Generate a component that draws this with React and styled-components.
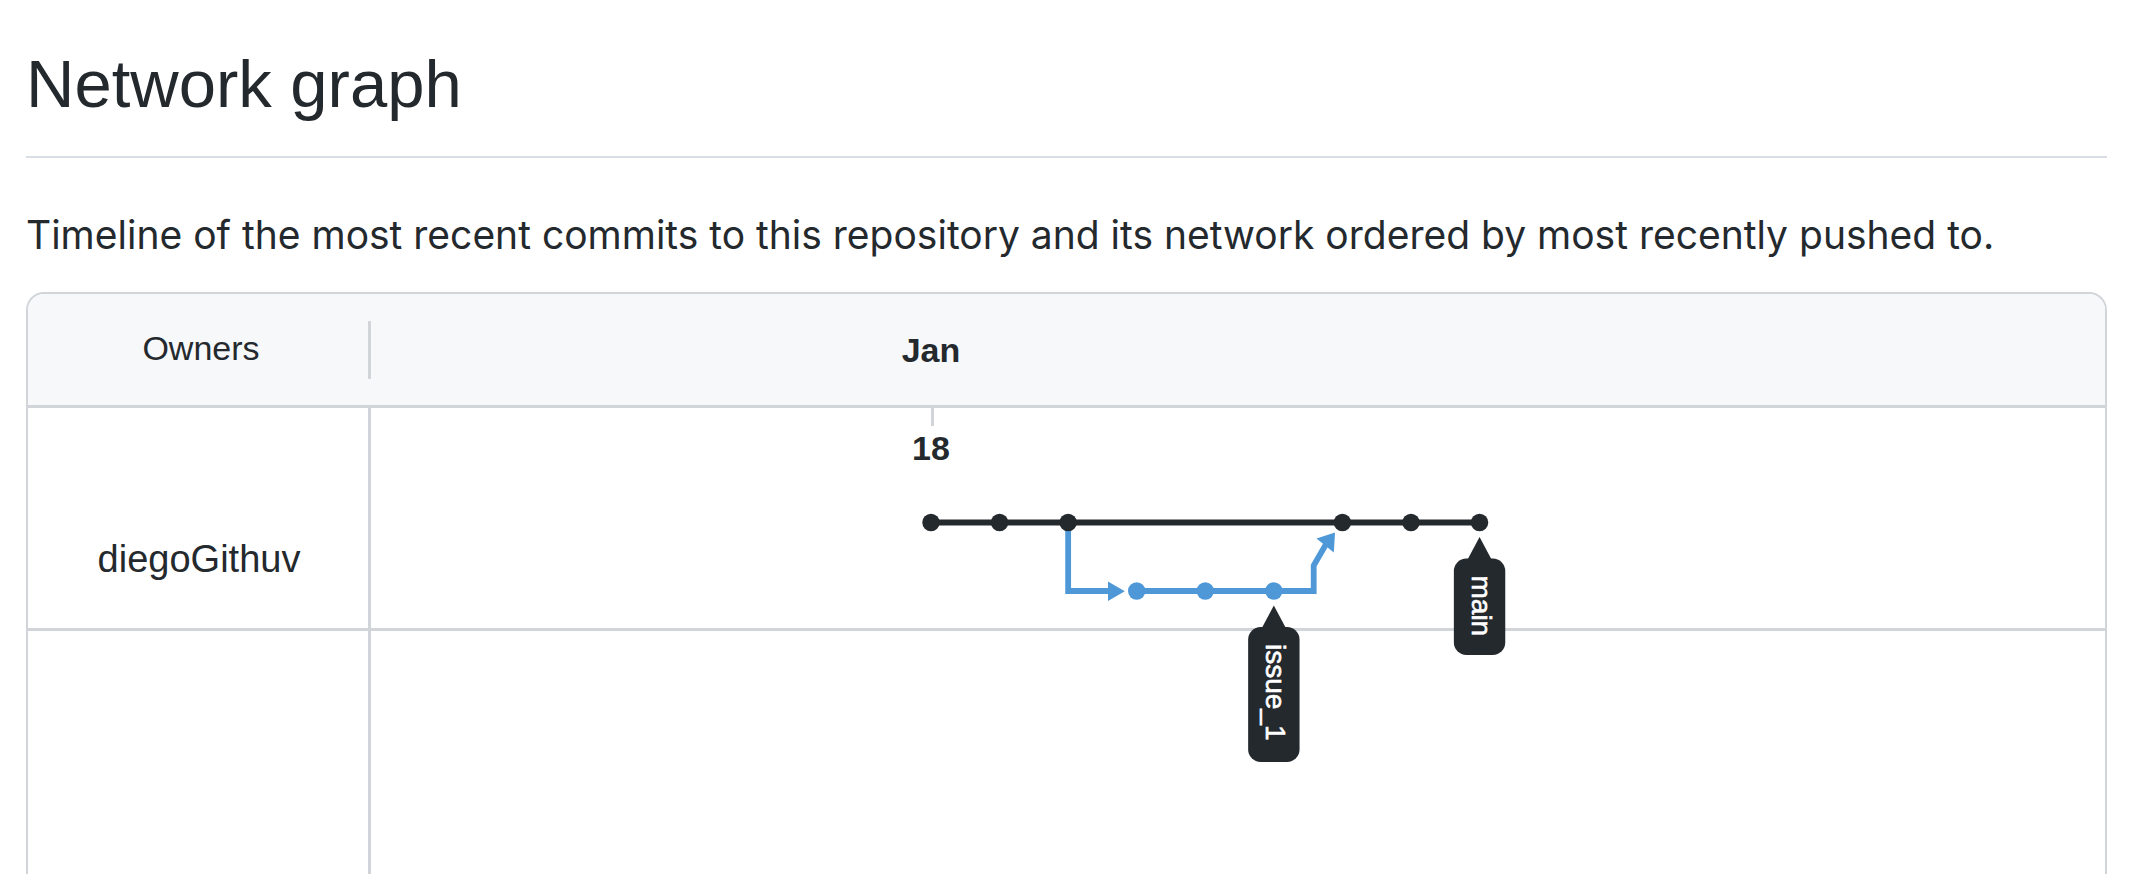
import React from 'react';
import styled, { createGlobalStyle } from 'styled-components';

const INK = '#24292e';
const LINE = '#d1d5da';
const BLUE = '#4f98d8';

const GlobalStyle = createGlobalStyle`
  * { box-sizing: border-box; }
  body { margin: 0; background: #fff; color: ${INK}; font-family: "Liberation Sans", Arial, sans-serif; }
`;

const Page = styled.main`
  display: flex;
  flex-direction: column;
  min-height: 100vh;
  padding: 36px 27px 0 26px;
`;

const Title = styled.h1`
  margin: 0;
  padding-bottom: 24px;
  border-bottom: 2px solid #d8dee4;
  font-size: 67px;
  font-weight: 400;
  line-height: 96px;
`;

const Lead = styled.p`
  margin: 47px 0 27px;
  font: 400 39px/60px Inter, sans-serif;
`;

const Panel = styled.section`
  display: flex;
  flex: 1;
  flex-direction: column;
  border: 2px solid ${LINE};
  border-bottom: 0;
  border-radius: 18px 18px 0 0;
`;

const Header = styled.header`
  display: flex;
  align-items: center;
  height: 114px;
  border-bottom: 3px solid ${LINE};
  border-radius: 16px 16px 0 0;
  background: #f6f8fa;
`;

const OwnersHeading = styled.h2`
  width: 343px;
  height: 58px;
  margin: 0;
  padding-left: 6px;
  border-right: 3px solid ${LINE};
  font-size: 34px;
  font-weight: 400;
  line-height: 54px;
  text-align: center;
`;

const Month = styled.strong`
  width: 120px;
  margin-left: 500px;
  font-size: 34px;
  line-height: 58px;
  text-align: center;
`;

const Row = styled.div`
  display: flex;
  flex: ${(p) => (p.$fill ? '1' : 'none')};
  height: ${(p) => (p.$fill ? 'auto' : '223px')};
  border-bottom: ${(p) => (p.$fill ? '0' : `3px solid ${LINE}`)};
`;

const Owner = styled.div`
  display: flex;
  align-items: center;
  justify-content: center;
  width: 343px;
  padding: 82px 0 0 2px;
  border-right: 3px solid ${LINE};
  font-size: 38px;
`;

const Timeline = styled.div`
  flex: 1;
  min-width: 0;
`;

const Graph = styled.svg`
  display: block;
  position: relative;
  overflow: visible;
`;

const Day = styled.text`
  font-size: 34px;
  font-weight: 700;
  text-anchor: middle;
  fill: ${INK};
`;

const TagText = styled.text`
  font-size: 28px;
  fill: #fff;
  stroke: #fff;
  stroke-width: 0.6px;
`;

const MAIN_Y = 114.5;
const BRANCH_Y = 183;
const commitX = (i) => 560 + i * 68.57;

function Commits({ at, y, color }) {
  return at.map((i) => <circle key={i} cx={commitX(i)} cy={y} r="8.7" fill={color} />);
}

function BranchTag({ index, y, length, name }) {
  return (
    <g transform={`translate(${commitX(index)} ${y})`}>
      <path d="M0 14.5 L12 37 H-12 Z" fill={INK} />
      <rect x="-25.7" y="36" width="51.4" height={length} rx="12.5" fill={INK} />
      <TagText transform="translate(-8 53) rotate(90)">{name}</TagText>
    </g>
  );
}

export default function App() {
  return (
    <>
      <GlobalStyle />
      <Page>
        <Title>Network graph</Title>
        <Lead>
          Timeline of the most recent commits to this repository and its network ordered by most
          recently pushed to.
        </Lead>
        <Panel>
          <Header>
            <OwnersHeading>Owners</OwnersHeading>
            <Month>Jan</Month>
          </Header>
          <Row>
            <Owner>diegoGithuv</Owner>
            <Timeline>
              <Graph width="1200" height="220" role="img" aria-label="Commit timeline">
                <path d="M561.5 0 V18" stroke={LINE} strokeWidth="3" />
                <Day x="560" y="52">18</Day>
                <g fill="none" strokeWidth="5.8">
                  <path d={`M${commitX(2)} ${MAIN_Y} V${BRANCH_Y} H740`} stroke={BLUE} />
                  <path d={`M${commitX(3)} ${BRANCH_Y} H942.7 V157.5 L956 134.5`} stroke={BLUE} />
                  <path d={`M${commitX(0)} ${MAIN_Y} H${commitX(8)}`} stroke={INK} />
                </g>
                <path d="M737 173.5 L753.8 183.2 L737 193 Z" fill={BLUE} />
                <path d="M964 124.5 L945.5 130.5 L962.8 144.5 Z" fill={BLUE} />
                <Commits at={[0, 1, 2, 6, 7, 8]} y={MAIN_Y} color={INK} />
                <Commits at={[3, 4, 5]} y={BRANCH_Y} color={BLUE} />
                <BranchTag index={8} y={MAIN_Y} length={96.5} name="main" />
                <BranchTag index={5} y={BRANCH_Y} length={135} name="issue_1" />
              </Graph>
            </Timeline>
          </Row>
          <Row $fill>
            <Owner />
            <Timeline />
          </Row>
        </Panel>
      </Page>
    </>
  );
}
